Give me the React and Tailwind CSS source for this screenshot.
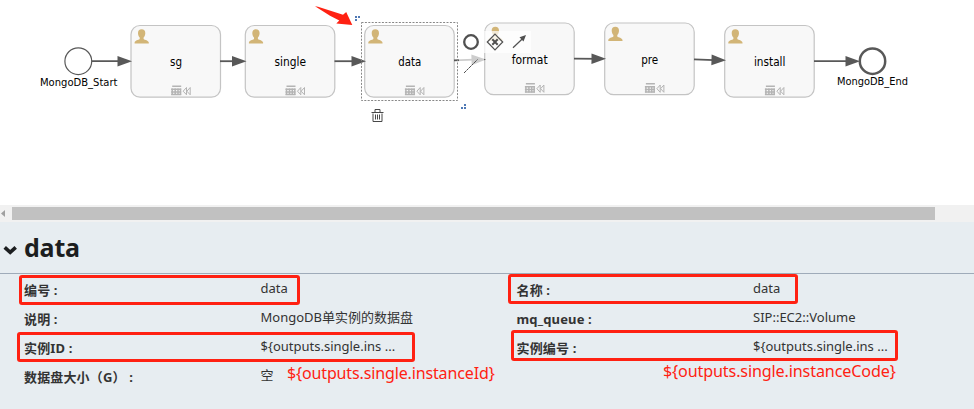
const INK = '#585858';

function UserIcon({ x, y }) {
  return (
    <path
      transform={`translate(${x} ${y})`}
      fill="#d2b577"
      d="M7 0C9.4 0 10.8 1.5 10.7 4C10.6 6 10 7.3 9 8.2V9.7C10.5 10.8 13.6 11 14.2 13.2V14.3H0V13.2C.5 11 3.6 10.8 5.1 9.7V8.2C4.1 7.3 3.5 6 3.4 4C3.3 1.5 4.7 0 7 0Z"
    />
  );
}

function Markers({ x, y }) {
  return (
    <g transform={`translate(${x} ${y})`} fill="none" stroke="#b4b4b4">
      <path d="M1 .8H10M0 3.8H10M0 6.5H10M0 9H10" strokeWidth="1.5" />
      <path d="M1 3V9.6M4 3V9.6M6.8 3V9.6M9.3 3V9.6" strokeWidth="1.5" />
      <path d="M15.3 2L12 5.7L15.3 9.3ZM19 2L15.7 5.7L19 9.3Z" />
    </g>
  );
}

function Task({ x, y, label, width }) {
  return (
    <g>
      <rect x={x} y={y} width="89.5" height="71.7" rx="9" fill="#f8f8f8" stroke="#c4c4c4" strokeWidth="1.2" />
      <UserIcon x={x + 3.6} y={y + 3.7} />
      <text
        x={x + 45}
        y={y + 40.5}
        textAnchor="middle"
        textLength={width}
        lengthAdjust="spacingAndGlyphs"
        fontSize="12"
        fill="#000"
      >
        {label}
      </text>
      <Markers x={x + 40.2} y={y + 60} />
    </g>
  );
}

function Flow({ x1, y1, x2, y2 }) {
  const angle = (Math.atan2(y2 - y1, x2 - x1) * 180) / Math.PI;
  return (
    <g>
      <path d={`M${x1} ${y1}L${x2 - 5} ${y2}`} stroke={INK} strokeWidth="1.8" />
      <path d="M0 0L-14.5 -5.3V5.3Z" fill={INK} transform={`translate(${x2} ${y2}) rotate(${angle})`} />
    </g>
  );
}

function Diagram() {
  return (
    <svg width="974" height="205" className="block shrink-0 bg-white font-['DejaVu_Sans',Verdana,sans-serif]">
      <circle cx="78.3" cy="61.2" r="13.4" fill="#fff" stroke={INK} strokeWidth="1.2" />
      <text x="40" y="86" fontSize="9.6" textLength="77.5" lengthAdjust="spacingAndGlyphs">MongoDB_Start</text>
      <Task x={131} y={25.5} label="sg" width={12} />
      <Task x={245.3} y={25.5} label="single" width={31.5} />
      <Task x={364.7} y={25.5} label="data" width={23} />
      <Task x={484.7} y={23} label="format" width={36} />
      <Task x={604.7} y={23} label="pre" width={17} />
      <Task x={724.7} y={25.5} label="install" width={31.5} />
      <Flow x1={92} y1={61.2} x2={132} y2={61.2} />
      <Flow x1={220} y1={61.2} x2={246.5} y2={61.2} />
      <Flow x1={334.5} y1={61.2} x2={366} y2={61.2} />
      <Flow x1={454} y1={60.4} x2={486} y2={59.4} />
      <Flow x1={574} y1={58.6} x2={606} y2={58.8} />
      <Flow x1={694} y1={59.3} x2={726} y2={60.3} />
      <Flow x1={814} y1={61.2} x2={860} y2={61.2} />
      <circle cx="872.5" cy="61.2" r="12.7" fill="#fff" stroke={INK} strokeWidth="2.5" />
      <text x="837" y="85" fontSize="9.6" textLength="71" lengthAdjust="spacingAndGlyphs">MongoDB_End</text>

      <rect x="361.5" y="22.5" width="96" height="78" fill="none" stroke="#888" strokeDasharray="2 1.4" />
      <path d="M355 16h2v2h-2zM358 16h2v2h-2zM355 19h2v2h-2zM464 104h2v2h-2zM461 107h2v2h-2zM464 107h2v2h-2z" fill="#4f79b5" />

      {/* quick-action pad beside the selected task */}
      <path d="M459 31H531V53H484V79H459Z" fill="#fff" opacity=".7" />
      <circle cx="471" cy="42" r="6.8" fill="#fff" stroke="#505050" strokeWidth="2.3" />
      <path d="M495 34.2L502.7 42L495 49.8L487.3 42Z" fill="#fff" fillOpacity=".4" stroke="#505050" strokeWidth="1.2" />
      <path d="M492.3 39.3L497.7 44.7M497.7 39.3L492.3 44.7" stroke="#505050" strokeWidth="2" />
      <path d="M513 47.8L523 38.2" stroke="#505050" strokeWidth="1.2" />
      <path d="M526 35L523.5 41.5L519.5 37.3Z" fill="#505050" />
      <path d="M464 73L477.5 59.5" stroke="#505050" strokeWidth="1" strokeDasharray="3 .5" />

      <path
        d="M371.5 112.5H383.5M375 112V109.5H380V112M373 113.5V121.5H382V113.5M375.5 114.5V119.5M377.5 114.5V119.5M379.5 114.5V119.5"
        fill="none"
        stroke="#484848"
      />
      <path d="M315 6.3L318 6.8L343 14.7L346.2 12L352.3 24.9L336.3 23.5L339.3 20.6L330 15.8Z" fill="#ff2112" />
    </svg>
  );
}

function Field({ label, value }) {
  return (
    <div className="flex h-[29px] w-[492.5px] text-[13px] leading-[29px] whitespace-nowrap text-[#333]">
      <div className="w-[236.5px] pt-px font-bold tracking-[0.15px]">{label}</div>
      <div className="-mt-px">{value}</div>
    </div>
  );
}

const FIELDS = [
  ['编号 :', 'data'],
  ['名称 :', 'data'],
  ['说明 :', 'MongoDB单实例的数据盘'],
  ['mq_queue :', 'SIP::EC2::Volume'],
  ['实例ID :', '${outputs.single.ins ...'],
  ['实例编号 :', '${outputs.single.ins ...'],
  ['数据盘大小（G） :', '空'],
];

export default function App() {
  return (
    <div className="relative flex h-[409px] w-[974px] flex-col overflow-hidden bg-[#e7edf1] font-['Noto_Sans','Noto_Sans_CJK_SC',sans-serif]">
      <Diagram />
      <div className="flex h-[17px] shrink-0 items-center bg-[#f1f1f1]">
        <svg width="12" height="13" className="shrink-0"><path d="M1 6.5L5 3V10Z" fill="#a0a0a0" /></svg>
        <div className="h-[13px] w-[923px] bg-[#c1c1c1]" />
      </div>
      <div className="flex h-[52px] shrink-0 items-center border-b border-[#9fabb9]">
        <svg width="24" height="20" className="mt-1 shrink-0"><path d="M4.7 7.3L10.2 12.3L15.7 7.3" fill="none" stroke="#1c1e20" strokeWidth="3.6" /></svg>
        <h1 className="-mt-0.5 text-[25px] leading-8 font-bold tracking-[-0.2px] text-[#1c1e20]">data</h1>
      </div>
      <div className="grid shrink-0 grid-cols-[492.5px_492.5px] pt-px pl-6">
        {FIELDS.map(([label, value]) => <Field key={label} label={label} value={value} />)}
      </div>

      <div className="absolute top-[275px] left-[19px] h-[30px] w-[281px] rounded-[3px] border-3 border-[#ff2112]" />
      <div className="absolute top-[332px] left-[17px] h-[30px] w-[398px] rounded-[3px] border-3 border-[#ff2112]" />
      <div className="absolute top-[274px] left-[508px] h-[30px] w-[290px] rounded-[3px] border-3 border-[#ff2112]" />
      <div className="absolute top-[330px] left-[511px] h-[31px] w-[387px] rounded-[3px] border-3 border-[#ff2112]" />
      <div className="absolute top-[361px] left-[287px] origin-left scale-x-[0.942] text-[17px] leading-6 tracking-[-0.15px] text-[#ff2112]">{'${outputs.single.instanceId}'}</div>
      <div className="absolute top-[359px] left-[663px] origin-left scale-x-[0.95] text-[17px] leading-6 tracking-[-0.15px] text-[#ff2112]">{'${outputs.single.instanceCode}'}</div>
    </div>
  );
}
